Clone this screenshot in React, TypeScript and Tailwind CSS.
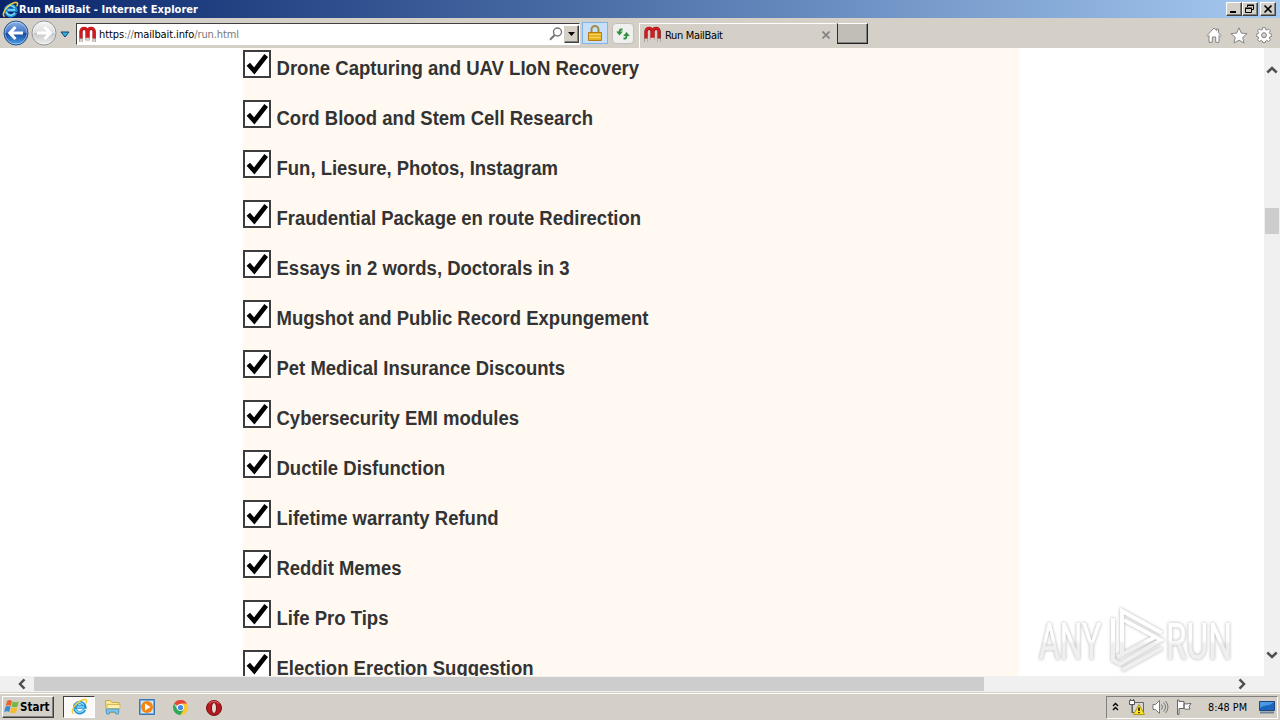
import type { ReactNode } from "react";
import clsx from "clsx";

const TOPICS = [
  { label: "Drone Capturing and UAV LIoN Recovery", width: 362.5 },
  { label: "Cord Blood and Stem Cell Research", width: 316.5 },
  { label: "Fun, Liesure, Photos, Instagram", width: 281.5 },
  { label: "Fraudential Package en route Redirection", width: 364.5 },
  { label: "Essays in 2 words, Doctorals in 3", width: 293 },
  { label: "Mugshot and Public Record Expungement", width: 372 },
  { label: "Pet Medical Insurance Discounts", width: 288.5 },
  { label: "Cybersecurity EMI modules", width: 242.5 },
  { label: "Ductile Disfunction", width: 168.5 },
  { label: "Lifetime warranty Refund", width: 222 },
  { label: "Reddit Memes", width: 125 },
  { label: "Life Pro Tips", width: 112 },
  { label: "Election Erection Suggestion", width: 257 },
];

function IeLogo({ className }: { className?: string }) {
  return (
    <svg viewBox="0 0 18 18" className={className} fill="none">
      <path d="M14.3 12.3A5.4 5.4 0 1 1 14.7 9.6H5.500" stroke="#1c8fd6" strokeWidth="3.6" />
      <path d="M13.600 12.500A5 5 0 0 1 4.500 11.500M4.500 8A5 5 0 0 1 13.500 7.500M6 9.600h8" stroke="#8bdcfa" strokeWidth="1.500" />
      <path
        d="M2.800 16.500C.2 15.500 1.600 10.200 6 5.800 10.600 1.400 15.900.4 16.400 2.800c.2 1-.3 2-.9 3"
        stroke="#f5cb38"
        strokeWidth="1.600"
      />
    </svg>
  );
}

function Magnet() {
  return (
    <svg viewBox="0 0 17 17" className="h-[17px] w-[17px] shrink-0" fill="none">
      <path d="M2 16V5.500a3.100 3.100 0 0 1 6.200 0V14M9 14V5.500a3.100 3.100 0 0 1 6.200 0V16" stroke="#741313" strokeWidth="3.200" />
      <path d="M2 12V5a2.900 2.900 0 0 1 5.800 0v8M9 13V5a2.900 2.900 0 0 1 5.800 0v7" stroke="#d51920" strokeWidth="2.400" />
      <path d="M.5 14.300h3.200M6.500 13.500h4.200M13.500 14.300h3.200" stroke="#d2d2cf" strokeWidth="3.400" />
    </svg>
  );
}

function RoundArrow({ active }: { active?: boolean }) {
  return (
    <svg viewBox="0 0 26 26" className={clsx("h-[26px] w-[26px] shrink-0", !active && "-scale-x-100")}>
      <defs>
        <linearGradient id={active ? "navOn" : "navOff"} x2="0" y2="1">
          <stop stopColor={active ? "#8fb4e6" : "#f7f7f7"} />
          <stop offset=".48" stopColor={active ? "#3f74c5" : "#dedede"} />
          <stop offset=".52" stopColor={active ? "#1549a0" : "#c7c8ca"} />
          <stop offset="1" stopColor={active ? "#4fa5eb" : "#efefef"} />
        </linearGradient>
      </defs>
      <circle
        cx="13"
        cy="13"
        r="12"
        fill={active ? "url(#navOn)" : "url(#navOff)"}
        stroke={active ? "#254b85" : "#8e9298"}
      />
      <circle cx="13" cy="13" r="11" fill="none" stroke="#fff" strokeOpacity=".4" />
      <path d="M20 13H7M12.5 7L6.8 13l5.7 6" stroke="#fff" strokeWidth="3" fill="none" />
    </svg>
  );
}

function CaptionButton({ children, className }: { children: ReactNode; className?: string }) {
  return (
    <button
      type="button"
      className={clsx(
        "h-[14px] w-4 border border-t-white border-l-white border-r-[#404040] border-b-[#404040] bg-[#d4d0c8] shadow-[inset_-1px_-1px_#808080]",
        className,
      )}
    >
      <svg viewBox="0 0 14 12" className="h-3 w-[14px]" fill="none" stroke="#000">
        {children}
      </svg>
    </button>
  );
}

function TitleBar() {
  return (
    <header className="flex h-[18px] items-center bg-linear-to-r from-[#0a246a] to-[#a6caf0] pr-1 pl-[2px]">
      <IeLogo className="h-[17px] w-[17px]" />
      <svg className="h-[18px] w-[190px]">
        <text
          x="0"
          y="13"
          textLength="179"
          className="fill-white font-['DejaVu_Sans_Condensed','DejaVu_Sans',sans-serif] text-[11px] font-bold"
        >
          Run MailBait - Internet Explorer
        </text>
      </svg>
      <div className="ml-auto flex">
        <CaptionButton>
          <path d="M3 9h6" strokeWidth="2" />
        </CaptionButton>
        <CaptionButton>
          <path d="M4.5 4V2.5h6v4H9M4 2h7M2.5 5.5h6v4h-6zM2 5h7" />
        </CaptionButton>
        <CaptionButton className="ml-[2px]">
          <path d="M3.5 2.5l7 7M10.5 2.5l-7 7" strokeWidth="1.7" />
        </CaptionButton>
      </div>
    </header>
  );
}

function Toolbar() {
  return (
    <nav className="flex h-[30px] items-start bg-[#d4d0c8] pt-[2px] pl-[3px] text-[11px] text-black">
      <RoundArrow active />
      <span className="ml-[2px] flex">
        <RoundArrow />
      </span>
      <svg viewBox="0 0 10 7" className="mt-[11px] ml-[3px] h-[7px] w-[10px]">
        <path d="M1 1h8L5 6z" fill="#2cb3d6" stroke="#164079" />
      </svg>
      <div className="mt-[3px] ml-[6px] flex h-[22px] w-[504px] items-center border border-t-[#404040] border-r-white border-b-white border-l-[#404040] bg-white pl-[2px]">
        <Magnet />
        <svg className="ml-[3px] h-5 w-[150px]">
          <text x="0" y="14" textLength="140" className="fill-black font-['DejaVu_Sans_Condensed','DejaVu_Sans',sans-serif] text-[11px]">
            <tspan>https</tspan>
            <tspan fill="#777">://</tspan>
            <tspan>mailbait.info</tspan>
            <tspan fill="#777">/run.html</tspan>
          </text>
        </svg>
        <svg viewBox="0 0 14 14" className="ml-auto h-[14px] w-[14px]" fill="none" stroke="#777">
          <circle cx="8.5" cy="5" r="4" strokeWidth="1.4" />
          <path d="M5.7 8L1 12.7" strokeWidth="2" />
        </svg>
        <div className="ml-px flex h-[18px] w-[15px] items-center justify-center border border-t-white border-r-[#404040] border-b-[#404040] border-l-[#d4d0c8] bg-[#d4d0c8] shadow-[inset_-1px_-1px_#808080]">
          <svg viewBox="0 0 7 4" className="h-1 w-[7px]">
            <path d="M0 0h7L3.5 4z" />
          </svg>
        </div>
      </div>
      <div className="mt-[2px] ml-[2px] flex h-[22px] w-[26px] items-center justify-center border border-[#7eb4ea] bg-[#c7dff7]">
        <svg viewBox="0 0 14 17" className="h-[17px] w-[14px]">
          <path d="M3.5 8V4.5a3.5 3.5 0 0 1 7 0V8" fill="none" stroke="#a28c4c" strokeWidth="2" />
          <path d="M.5 7.5h13v8H.5z" fill="#e8b323" stroke="#b77b13" />
          <path d="M1 9.5h12M1 12.5h12" stroke="#f8d561" />
        </svg>
      </div>
      <div className="mt-[3px] ml-1 flex h-[21px] w-[22px] items-center justify-center rounded-sm border border-[#c2c0bb] bg-[#efefed]">
        <svg viewBox="0 0 16 14" className="h-[14px] w-4" fill="none" stroke="#2f913c">
          <path d="M7.500 2.500H6Q4.500 2.500 4.500 5M8.500 11.500H10q1.500 0 1.500-3" strokeWidth="1.800" />
          <path d="M1.200 4.500h6.600L4.500 8.500zM8.200 9h6.600L11.500 5z" fill="#2f913c" stroke="none" />
        </svg>
      </div>
      <div className="mt-[3px] ml-[5px] flex h-[25px] w-[197px] items-center border-t border-l border-white pr-[6px] pb-[3px] pl-1">
        <Magnet />
        <svg className="ml-1 h-5 w-[80px]">
          <text x="0" y="14" textLength="58" className="font-['DejaVu_Sans_Condensed','DejaVu_Sans',sans-serif] text-[11px]">
            Run MailBait
          </text>
        </svg>
        <svg viewBox="0 0 8 8" className="ml-auto h-2 w-2">
          <path d="M.5.5l7 7M7.5.5l-7 7" stroke="#828282" strokeWidth="1.7" />
        </svg>
      </div>
      <div className="mt-[3px] ml-px h-[21px] w-[31px] border border-t-white border-r-[#202020] border-b-[#202020] border-l-[#303030] bg-[#c1beb8] shadow-[inset_-1px_-1px_#808080]" />
      <div className="mt-[7px] mr-2 ml-auto flex gap-2">
        <svg viewBox="0 0 16 16" className="h-4 w-4" fill="#fff" stroke="#858585">
          <path d="M1 8.5L8 1l2.5 2.6V2h2v3.7L15 8.5l-1 1-1-1v6.8H9.700V10H6.300v5.300H3V8.500l-1 1z" />
        </svg>
        <svg viewBox="0 0 18 17" className="h-[17px] w-[18px]" fill="#fff" stroke="#858585">
          <path d="M9 .8l2.3 5.3 5.8.5-4.4 3.8 1.3 5.7L9 13.1l-5 3 1.3-5.7L.9 6.6l5.8-.5z" />
        </svg>
        <svg viewBox="0 0 16 16" className="h-4 w-4" fill="#fff" stroke="#858585">
          <path d="M6.7.6h2.6l.4 2 1.2.5L12.6 2l1.8 1.8-1.1 1.7.5 1.2 1.9.4v2.300l-1.900.5-.5 1.200 1.100 1.700-1.800 1.800-1.700-1.100-1.200.5-.4 1.500H6.700L6.300 14l-1.200-.5-1.700 1.100-1.800-1.800 1.100-1.700-.5-1.200-1.900-.5V7.100l1.900-.4.5-1.200-1.100-1.700L3.400 2l1.700 1.100 1.200-.5z" />
          <circle cx="8" cy="8.2" r="2.5" fill="#d4d0c8" />
        </svg>
      </div>
    </nav>
  );
}

function TopicRow({ label, width }: { label: string; width: number }) {
  return (
    <label className="flex h-[50px] shrink-0 items-start">
      <svg viewBox="0 0 28 28" className="h-7 w-7 shrink-0">
        <path d="M1 1h26v26H1z" fill="#fff" stroke="#3d3d3d" strokeWidth="2" />
        <path d="M5.300 14.300l6 6.700L23.200 5.500" fill="none" stroke="#000" strokeWidth="4.600" />
      </svg>
      <svg className="ml-[6px] h-[34px] w-[400px]">
        <text
          x="-.5"
          y="25"
          textLength={width}
          lengthAdjust="spacingAndGlyphs"
          className="fill-[#333] font-['Liberation_Sans',Arial,sans-serif] text-[20px] font-bold"
        >
          {label}
        </text>
      </svg>
    </label>
  );
}

function Chevron({ className }: { className?: string }) {
  return (
    <svg viewBox="0 0 12 8" className={clsx("h-2 w-3", className)}>
      <path d="M1.300 6.500L6 2l4.700 4.500" fill="none" stroke="#505050" strokeWidth="2.500" />
    </svg>
  );
}

function Watermark() {
  return (
    <svg
      viewBox="0 0 204 72"
      className="absolute top-[556px] left-[1034px] h-[72px] w-[204px] drop-shadow-[0_0_1.5px_rgba(0,0,0,0.32)]"
    >
      <defs>
        <linearGradient id="mark" x2="0" y2="72" gradientUnits="userSpaceOnUse">
          <stop stopColor="#fff" />
          <stop offset=".5" stopColor="#fff" />
          <stop offset=".56" stopColor="#efefef" />
          <stop offset="1" stopColor="#f0f0f0" />
        </linearGradient>
      </defs>
      <g
        fill="url(#mark)"
        stroke="url(#mark)"
        strokeWidth=".6"
        className="font-['Roboto','Liberation_Sans',sans-serif] text-[50px]"
      >
        <text x="5" y="55" textLength="62" lengthAdjust="spacingAndGlyphs">
          ANY
        </text>
        <text x="132" y="55" textLength="66" lengthAdjust="spacingAndGlyphs">
          RUN
        </text>
      </g>
      <g fill="none" stroke="url(#mark)" strokeWidth="4">
        <path d="M88 50V7l40 22" />
        <path d="M79 14v42l7 4 41-24-37-20M83 53l40-21M88 66l40-22" />
      </g>
    </svg>
  );
}

function Page() {
  return (
    <main className="relative flex h-[628px] overflow-hidden bg-white">
      <div className="ml-[243px] flex h-full w-[776px] flex-col overflow-hidden bg-[#fff9f2] pt-[2px]">
        {TOPICS.map((topic) => (
          <TopicRow key={topic.label} {...topic} />
        ))}
      </div>
      <div className="ml-auto flex w-4 flex-col items-center bg-[#f0f0f0]">
        <Chevron className="mt-[18px]" />
        <div className="mt-[134px] h-[26px] w-[14px] bg-[#cdcdcd]" />
        <Chevron className="mt-auto mb-[17px] rotate-180" />
      </div>
      <Watermark />
    </main>
  );
}

function Taskbar() {
  return (
    <footer className="flex h-7 items-center border-t border-[#d4d0c8] bg-[#d4d0c8] shadow-[inset_0_1px_#fff]">
      <button
        type="button"
        className="ml-[2px] flex h-[22px] w-[52px] items-center border border-t-white border-r-[#404040] border-b-[#404040] border-l-white pl-px shadow-[inset_-1px_-1px_#808080]"
      >
        <svg viewBox="0 0 16 15" className="h-[15px] w-4">
          <path d="M3 2c2-1.5 3.5-1 5 0L6.8 7c-1.5-1-3.2-1.2-5 0z" fill="#ef632a" />
          <path d="M8.8 2.4c2 1 4 1 6 0L13.5 7.5c-2 1-4 1-6 0z" fill="#75b843" />
          <path d="M1.5 7.8c1.8-1.2 3.5-1 5 0L5.2 13c-1.5-1.1-3.2-1.1-5 0z" fill="#388bd4" />
          <path d="M7.3 8.3c2 1 4 1 6 0L12 13.5c-2 1-4 1-6 0z" fill="#f7bb2b" />
        </svg>
        <svg className="h-5 w-[30px]">
          <text x="0" y="14" textLength="29.5" lengthAdjust="spacingAndGlyphs" className="font-['DejaVu_Sans_Condensed','DejaVu_Sans',sans-serif] text-[11.5px] font-bold">
            Start
          </text>
        </svg>
      </button>
      <div className="ml-[9px] flex h-[22px] w-8 items-center justify-center border border-t-[#404040] border-r-white border-b-white border-l-[#404040] bg-[#fbfaf8]">
        <IeLogo className="h-[17px] w-[17px]" />
      </div>
      <svg viewBox="0 0 17 16" className="mt-px ml-[9px] h-4 w-[17px]">
        <path d="M1.5 1.5h5l1.5 2h7v10h-13z" fill="#f8e798" stroke="#ccaa44" />
        <path d="M3 5.5h13v4H3z" fill="#fff0ad" stroke="#d4b759" />
        <path d="M2.5 15v-5h12v5h-3v-2h-6v2z" fill="#7fc4e5" stroke="#5b9fc5" />
      </svg>
      <svg viewBox="0 0 16 16" className="mt-px ml-[18px] h-4 w-4">
        <path d="M.5.5h15v15H.5z" fill="#77ace0" stroke="#3d75b5" />
        <path d="M2 2h12v12H2z" fill="#d8eaf8" />
        <circle cx="8" cy="8" r="6" fill="#f18617" />
        <path d="M6 4.5L11.5 8 6 11.5z" fill="#fff" />
      </svg>
      <svg viewBox="0 0 16 16" className="mt-px ml-[18px] h-[15px] w-[15px]">
        <path d="M8 8L1.100 4A8 8 0 0 1 15 4H8z" fill="#e64435" />
        <path d="M8 8l-3.500 2L1.100 4A8 8 0 0 0 8 16l4-6z" fill="#30a956" />
        <path d="M8 4h7A8 8 0 0 1 8 16l3.500-6z" fill="#fbc72f" />
        <circle cx="8" cy="8" r="3.700" fill="#fff" />
        <circle cx="8" cy="8" r="2.800" fill="#4688e8" />
      </svg>
      <svg viewBox="0 0 16 16" className="mt-[2px] ml-[18px] h-4 w-4">
        <circle cx="8" cy="8" r="7.5" fill="#b71920" stroke="#7c1015" />
        <ellipse cx="8" cy="8" rx="2.500" ry="5.500" fill="#e7d9d4" stroke="#751014" />
        <path d="M3 3.500A7 7 0 0 1 13 3.500" fill="none" stroke="#e56467" />
      </svg>
      <div className="mt-px mr-[2px] ml-auto flex h-[23px] w-[172px] items-center border border-t-[#808080] border-r-white border-b-white border-l-[#808080]">
        <svg viewBox="0 0 7 9" className="mb-[2px] ml-[5px] h-[9px] w-[7px]" fill="none" stroke="#000" strokeWidth="1.400">
          <path d="M1 4l2.500-2.500L6 4M1 8l2.500-2.500L6 8" />
        </svg>
        <svg viewBox="0 0 17 16" className="ml-[9px] h-4 w-[17px]">
          <path d="M4.500 3.500h11v10h-11z" fill="#d7d7d5" stroke="#666" />
          <path d="M1.500 1.500h5v4h-5zM2.500 0v2M5.500 0v2M4 6v8" fill="#fff" stroke="#555" />
          <path d="M11 5.500l5.500 10h-11z" fill="#fce22a" stroke="#b29a18" />
          <path d="M11 8.500v3.500M11 13v1.300" stroke="#000" strokeWidth="1.400" />
        </svg>
        <svg viewBox="0 0 17 16" className="ml-[7px] h-4 w-[17px]" fill="none" stroke="#777">
          <path d="M1 5.500h2.500L7.500 1.500v13l-4-4H1z" fill="#fff" />
          <path d="M9.500 5.500q2 2.500 0 5M11.500 3.500q4 4.500 0 9M13.500 2q5 6 0 12" />
        </svg>
        <svg viewBox="0 0 16 16" className="ml-[7px] h-4 w-4" fill="#fff" stroke="#666">
          <path d="M1.500 1v14.500h1.500V9.500h5V2.500H3V1zM8 4.500c2 1 4 0 7 0l-2 3 1 2.500c-2 0-4 1-6-.5z" />
        </svg>
        <svg className="ml-4 h-5 w-[40px]">
          <text x="0" y="14" textLength="39" lengthAdjust="spacingAndGlyphs" className="font-['DejaVu_Sans_Condensed','DejaVu_Sans',sans-serif] text-[11px]">
            8:48 PM
          </text>
        </svg>
        <svg viewBox="0 0 16 13" className="ml-[11px] h-[13px] w-4">
          <path d="M.5.500h15v9H.5z" fill="#1b65bd" stroke="#1d477c" />
          <path d="M1 7C6 3 9 6 15 1V1H1z" fill="#4a9ae2" />
          <path d="M1 11.500h14" stroke="#6e8396" strokeWidth="2" />
        </svg>
      </div>
    </footer>
  );
}

export default function App() {
  return (
    <div className="h-[720px] w-[1280px] overflow-hidden bg-[#d4d0c8]">
      <TitleBar />
      <Toolbar />
      <Page />
      <div className="flex h-4 items-center bg-[#f0f0f0] pl-4">
        <Chevron className="-rotate-90" />
        <div className="ml-[6px] h-[14px] w-[950px] bg-[#cdcdcd]" />
        <Chevron className="mr-8 ml-auto rotate-90" />
      </div>
      <Taskbar />
    </div>
  );
}
